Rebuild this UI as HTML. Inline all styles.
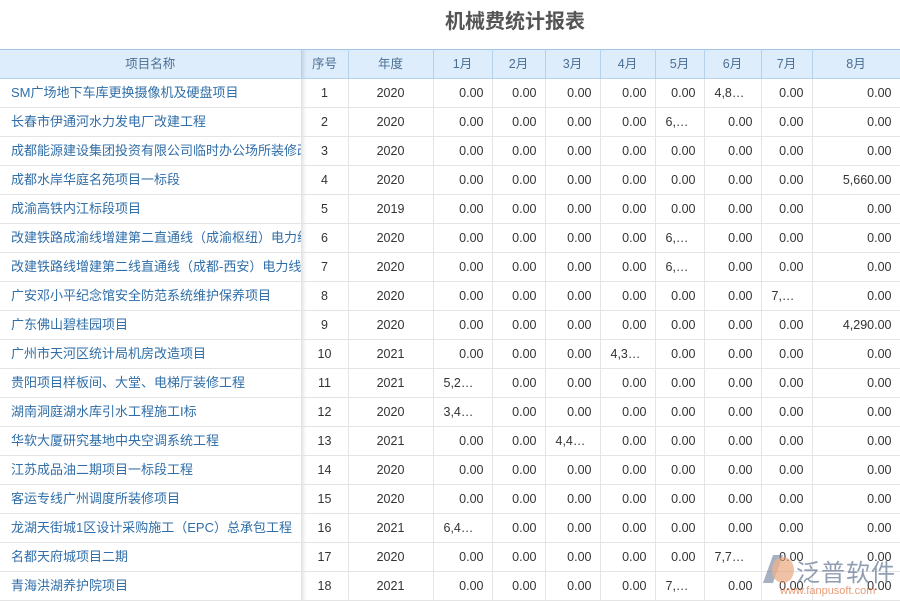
<!DOCTYPE html>
<html><head><meta charset="utf-8"><style>
body{margin:0;width:900px;height:600px;overflow:hidden;background:#fff;font-family:"Liberation Sans","Noto Sans CJK SC",sans-serif;position:relative}
h1{position:absolute;left:0;width:1030px;top:8px;margin:0;text-align:center;font-size:20px;font-weight:bold;color:#555;line-height:28px}
table{position:absolute;top:49px;left:0;border-collapse:collapse;table-layout:fixed;width:900px;font-size:12.5px;color:#333}
th{background:#deedfb;color:#4a6f94;font-weight:normal;height:28px;border:1px solid #b5d2ea;border-top:1px solid #9fc4e4;padding:0;line-height:14px}
td{height:28px;border:1px solid #e4e4e4;padding:0 8px;text-align:right;white-space:nowrap;overflow:hidden;line-height:14px}
td:first-child{text-align:left;color:#2f6ea8;padding-left:11px;text-overflow:clip;font-size:13px;border-left:none}
th:first-child{border-left:none}
td:nth-child(2),td:nth-child(3){text-align:center}
td.e{text-align:left;padding-left:10px}
td:nth-child(2),th:nth-child(2){box-shadow:inset 4px 0 4px -3px rgba(0,0,0,.15)}
.wm{position:absolute;left:770px;top:553px;opacity:.75}
.wm b{font-size:24px;color:#6c7d99;font-weight:normal;letter-spacing:1px;margin-left:26px}
.wm i{display:block;font-style:normal;font-size:11px;color:#e07a4a;margin-left:10px;margin-top:-3px}
.wm s{position:absolute;left:2px;top:4px;width:22px;height:26px;border-radius:50%;background:#e59a6a;opacity:.8}
.wm u{position:absolute;left:-2px;top:2px;width:10px;height:28px;background:#6c7d99;transform:skewX(-20deg);opacity:.8}
</style></head><body>
<h1>机械费统计报表</h1>
<table>
<colgroup><col style="width:301px"><col style="width:47px"><col style="width:85px"><col style="width:59px"><col style="width:53px"><col style="width:55px"><col style="width:55px"><col style="width:49px"><col style="width:57px"><col style="width:51px"><col style="width:88px"></colgroup>
<tr><th>项目名称</th><th>序号</th><th>年度</th><th>1月</th><th>2月</th><th>3月</th><th>4月</th><th>5月</th><th>6月</th><th>7月</th><th>8月</th></tr>
<tr><td>SM广场地下车库更换摄像机及硬盘项目</td><td>1</td><td>2020</td><td>0.00</td><td>0.00</td><td>0.00</td><td>0.00</td><td>0.00</td><td class="e">4,8…</td><td>0.00</td><td>0.00</td></tr>
<tr><td>长春市伊通河水力发电厂改建工程</td><td>2</td><td>2020</td><td>0.00</td><td>0.00</td><td>0.00</td><td>0.00</td><td class="e">6,…</td><td>0.00</td><td>0.00</td><td>0.00</td></tr>
<tr><td>成都能源建设集团投资有限公司临时办公场所装修改造</td><td>3</td><td>2020</td><td>0.00</td><td>0.00</td><td>0.00</td><td>0.00</td><td>0.00</td><td>0.00</td><td>0.00</td><td>0.00</td></tr>
<tr><td>成都水岸华庭名苑项目一标段</td><td>4</td><td>2020</td><td>0.00</td><td>0.00</td><td>0.00</td><td>0.00</td><td>0.00</td><td>0.00</td><td>0.00</td><td>5,660.00</td></tr>
<tr><td>成渝高铁内江标段项目</td><td>5</td><td>2019</td><td>0.00</td><td>0.00</td><td>0.00</td><td>0.00</td><td>0.00</td><td>0.00</td><td>0.00</td><td>0.00</td></tr>
<tr><td>改建铁路成渝线增建第二直通线（成渝枢纽）电力线路</td><td>6</td><td>2020</td><td>0.00</td><td>0.00</td><td>0.00</td><td>0.00</td><td class="e">6,…</td><td>0.00</td><td>0.00</td><td>0.00</td></tr>
<tr><td>改建铁路线增建第二线直通线（成都-西安）电力线路</td><td>7</td><td>2020</td><td>0.00</td><td>0.00</td><td>0.00</td><td>0.00</td><td class="e">6,…</td><td>0.00</td><td>0.00</td><td>0.00</td></tr>
<tr><td>广安邓小平纪念馆安全防范系统维护保养项目</td><td>8</td><td>2020</td><td>0.00</td><td>0.00</td><td>0.00</td><td>0.00</td><td>0.00</td><td>0.00</td><td class="e">7,…</td><td>0.00</td></tr>
<tr><td>广东佛山碧桂园项目</td><td>9</td><td>2020</td><td>0.00</td><td>0.00</td><td>0.00</td><td>0.00</td><td>0.00</td><td>0.00</td><td>0.00</td><td>4,290.00</td></tr>
<tr><td>广州市天河区统计局机房改造项目</td><td>10</td><td>2021</td><td>0.00</td><td>0.00</td><td>0.00</td><td class="e">4,3…</td><td>0.00</td><td>0.00</td><td>0.00</td><td>0.00</td></tr>
<tr><td>贵阳项目样板间、大堂、电梯厅装修工程</td><td>11</td><td>2021</td><td class="e">5,2…</td><td>0.00</td><td>0.00</td><td>0.00</td><td>0.00</td><td>0.00</td><td>0.00</td><td>0.00</td></tr>
<tr><td>湖南洞庭湖水库引水工程施工I标</td><td>12</td><td>2020</td><td class="e">3,4…</td><td>0.00</td><td>0.00</td><td>0.00</td><td>0.00</td><td>0.00</td><td>0.00</td><td>0.00</td></tr>
<tr><td>华软大厦研究基地中央空调系统工程</td><td>13</td><td>2021</td><td>0.00</td><td>0.00</td><td class="e">4,4…</td><td>0.00</td><td>0.00</td><td>0.00</td><td>0.00</td><td>0.00</td></tr>
<tr><td>江苏成品油二期项目一标段工程</td><td>14</td><td>2020</td><td>0.00</td><td>0.00</td><td>0.00</td><td>0.00</td><td>0.00</td><td>0.00</td><td>0.00</td><td>0.00</td></tr>
<tr><td>客运专线广州调度所装修项目</td><td>15</td><td>2020</td><td>0.00</td><td>0.00</td><td>0.00</td><td>0.00</td><td>0.00</td><td>0.00</td><td>0.00</td><td>0.00</td></tr>
<tr><td>龙湖天街城1区设计采购施工（EPC）总承包工程</td><td>16</td><td>2021</td><td class="e">6,4…</td><td>0.00</td><td>0.00</td><td>0.00</td><td>0.00</td><td>0.00</td><td>0.00</td><td>0.00</td></tr>
<tr><td>名都天府城项目二期</td><td>17</td><td>2020</td><td>0.00</td><td>0.00</td><td>0.00</td><td>0.00</td><td>0.00</td><td class="e">7,7…</td><td>0.00</td><td>0.00</td></tr>
<tr><td>青海洪湖养护院项目</td><td>18</td><td>2021</td><td>0.00</td><td>0.00</td><td>0.00</td><td>0.00</td><td class="e">7,…</td><td>0.00</td><td>0.00</td><td>0.00</td></tr>
</table>
<div class="wm"><u></u><s></s><b>泛普软件</b><i>www.fanpusoft.com</i></div>
</body></html>
